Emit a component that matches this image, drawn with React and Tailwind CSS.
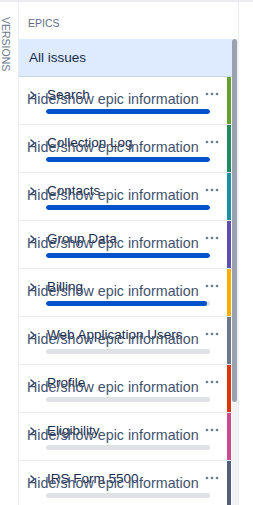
import React from 'react';

const epics = [
  { name: 'Search', color: 'bg-[#64a22f]', done: 100 },
  { name: 'Collection Log', color: 'bg-[#1f8a5b]', done: 100 },
  { name: 'Contacts', color: 'bg-[#1b8fa3]', done: 100 },
  { name: 'Group Data', color: 'bg-[#5e4db2]', done: 100 },
  { name: 'Billing', color: 'bg-[#ffab00]', done: 98 },
  { name: 'Web Application Users', color: 'bg-[#6b778c]', done: 0 },
  { name: 'Profile', color: 'bg-[#de350b]', done: 0 },
  { name: 'Eligibility', color: 'bg-[#cd4a91]', done: 0 },
  { name: 'IRS Form 5500', color: 'bg-[#505f79]', done: 0 },
];

function Chevron() {
  return (
    <svg width="8" height="8" viewBox="0 0 8 8" className="text-[#344563]">
      <path d="M2 1 L5.5 4 L2 7" fill="none" stroke="currentColor" strokeWidth="1.6" strokeLinecap="round" strokeLinejoin="round" />
    </svg>
  );
}

function Dots() {
  return (
    <svg width="14" height="4" viewBox="0 0 14 4" className="text-[#6b778c]">
      <circle cx="2" cy="2" r="1.3" fill="currentColor" />
      <circle cx="7" cy="2" r="1.3" fill="currentColor" />
      <circle cx="12" cy="2" r="1.3" fill="currentColor" />
    </svg>
  );
}

function EpicRow({ epic }) {
  return (
    <div className="relative flex h-[48px] shrink-0 border-b border-[#ebecf0]">
      <div className="flex flex-1 pl-[10px] pr-[8px] pt-[8px]">
        <div className="w-[17px] pt-[6px]">
          <Chevron />
        </div>
        <div className="flex flex-1 flex-col">
          <div className="flex h-[20px] items-start">
            <div className="flex-1 truncate pl-[1px] text-[13.5px] leading-[20px] text-[#172b4d]">{epic.name}</div>
            <div className="mt-[7px]">
              <Dots />
            </div>
          </div>
          <div className="mt-[4px] h-[4.5px] w-[164px] overflow-hidden rounded-full bg-[#dfe1e6]">
            <div className="h-full rounded-full bg-[#0052cc]" style={{ width: `${epic.done}%` }} />
          </div>
        </div>
      </div>
      <div className={`w-[4px] ${epic.color}`} />
      <div className="w-[1px]" />
      <span className="absolute left-[8px] top-[12px] whitespace-nowrap text-[14.3px] leading-[20px] text-[#42526e]">
        Hide/show epic information
      </span>
    </div>
  );
}

export default function App() {
  return (
    <div className="flex h-[505px] w-[253px] overflow-hidden border-t-2 border-[#ebecf0] bg-white font-['Liberation_Sans',Arial,sans-serif]">
      <div className="w-[19px] shrink-0 border-r border-[#ebecf0] pt-[15px]">
        <div className="mx-auto text-[10.5px] uppercase leading-[12px] text-[#6b778c] [writing-mode:vertical-rl]">Versions</div>
      </div>
      <div className="flex w-[220px] shrink-0 flex-col border-r border-[#ebecf0]">
        <div className="h-[37px] shrink-0 pl-[9px] pt-[15px] text-[10.5px] uppercase leading-[12px] text-[#5e6c84]">Epics</div>
        <div className="flex flex-1 overflow-hidden">
          <div className="flex w-[213px] shrink-0 flex-col">
            <div className="h-[38px] shrink-0 border-b border-[#c9d7ec] bg-[#deebff] pl-[10px] text-[13.5px] leading-[37px] text-[#172b4d]">
              All issues
            </div>
            {epics.map((e) => (
              <EpicRow key={e.name} epic={e} />
            ))}
          </div>
          <div className="w-[6px] shrink-0 bg-[#f1f2f4]">
            <div className="h-[363px] w-[5px] rounded-full bg-[#9aa2b1]" />
          </div>
        </div>
      </div>
      <div className="flex-1" />
    </div>
  );
}
